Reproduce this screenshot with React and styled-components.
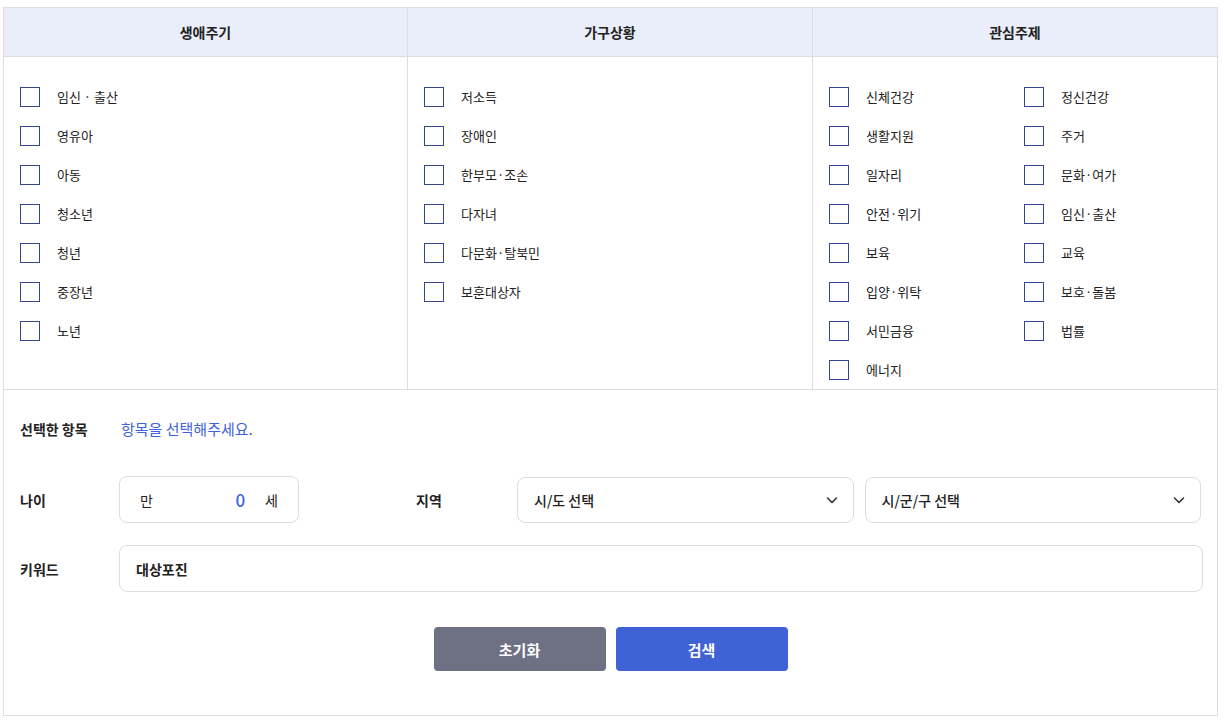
import React from 'react';
import styled, { createGlobalStyle } from 'styled-components';

const GlobalStyle = createGlobalStyle`
  body {
    margin: 0;
    background: #fff;
    font-family: "Noto Sans CJK KR", "Noto Sans", sans-serif;
    color: #222;
  }
`;

const lifeCycle = ['임신 · 출산', '영유아', '아동', '청소년', '청년', '중장년', '노년'];
const household = ['저소득', '장애인', '한부모·조손', '다자녀', '다문화·탈북민', '보훈대상자'];
const interests = [
  '신체건강', '정신건강', '생활지원', '주거', '일자리', '문화·여가', '안전·위기', '임신·출산',
  '보육', '교육', '입양·위탁', '보호·돌봄', '서민금융', '법률', '에너지',
];

const Wrapper = styled.div`
  box-sizing: border-box;
  width: 1215px;
  margin: 7px 0 0 3px;
  border: 1px solid #dcdde2;
`;

const Table = styled.div`
  display: grid;
  grid-template-columns: 403px 405px 1fr;
  border-bottom: 1px solid #dcdde2;
`;

const HeadCell = styled.div`
  box-sizing: border-box;
  height: 49px;
  display: flex;
  align-items: center;
  justify-content: center;
  background: #e9eefa;
  border-bottom: 1px solid #dcdde2;
  border-left: ${p => (p.first ? 'none' : '1px solid #dcdde2')};
  font-size: 14px;
  font-weight: 700;
`;

const BodyCell = styled.div`
  display: grid;
  grid-template-columns: ${p => (p.cols === 2 ? '195px 1fr' : '1fr')};
  align-content: start;
  padding: 20px 16px 0;
  height: 332px;
  box-sizing: border-box;
  border-left: ${p => (p.first ? 'none' : '1px solid #dcdde2')};
`;

const Option = styled.label`
  display: flex;
  align-items: center;
  height: 39px;
  font-size: 13px;
  color: #222;
  cursor: pointer;
`;

const Box = styled.span`
  box-sizing: border-box;
  width: 20px;
  height: 20px;
  border: 1px solid #34478e;
  margin-right: 17px;
  flex-shrink: 0;
`;

const Form = styled.div`
  padding: 28px 14px 44px 16px;
`;

const Row = styled.div`
  display: flex;
  align-items: center;
  margin-top: ${p => p.gap || 0}px;
`;

const Label = styled.div`
  width: ${p => p.w || 99}px;
  flex-shrink: 0;
  font-size: 14px;
  font-weight: 700;
  color: #222;
`;

const Hint = styled.div`
  margin-left: 2px;
  font-size: 15px;
  color: #3d63dd;
`;

const Field = styled.div`
  box-sizing: border-box;
  height: 47px;
  border: 1px solid #dcdde2;
  border-radius: 8px;
  display: flex;
  align-items: center;
  padding: 0 16px;
  font-size: 14px;
  background: #fff;
`;

const AgeBox = styled(Field)`
  width: 180px;
  padding: 0 20px;
  margin-right: 117px;
`;

const AgeValue = styled.span`
  flex: 1;
  text-align: right;
  margin-right: 20px;
  color: #3d63dd;
  font-size: 17px;
  font-weight: 500;
`;

const Selects = styled.div`
  flex: 1;
  display: flex;
  gap: 11px;
  margin-right: 2px;
`;

const Select = styled(Field)`
  flex: 1;
  height: 46px;
  justify-content: space-between;
  padding: 0 14px 0 16px;
  font-weight: 500;
`;

const Keyword = styled(Field)`
  flex: 1;
  font-weight: 700;
`;

const Buttons = styled.div`
  display: flex;
  justify-content: center;
  gap: 10px;
  margin: 35px 2px 0 0;
`;

const Button = styled.button`
  width: 172px;
  height: 44px;
  border: none;
  border-radius: 4px;
  background: ${p => (p.primary ? '#3f62d6' : '#6e7084')};
  color: #fff;
  font-family: inherit;
  font-size: 15px;
  font-weight: 700;
`;

const Chevron = () => (
  <svg width="14" height="14" viewBox="0 0 14 14" fill="none">
    <path d="M2.5 5l4.5 4.5L11.5 5" stroke="#333" strokeWidth="1.6" strokeLinecap="round" strokeLinejoin="round" />
  </svg>
);

const Options = ({ items }) =>
  items.map(t => (
    <Option key={t}>
      <Box />
      {t}
    </Option>
  ));

export default function App() {
  return (
    <Wrapper>
      <GlobalStyle />
      <Table>
        <HeadCell first>생애주기</HeadCell>
        <HeadCell>가구상황</HeadCell>
        <HeadCell>관심주제</HeadCell>
        <BodyCell first>
          <Options items={lifeCycle} />
        </BodyCell>
        <BodyCell>
          <Options items={household} />
        </BodyCell>
        <BodyCell cols={2}>
          <Options items={interests} />
        </BodyCell>
      </Table>
      <Form>
        <Row>
          <Label>선택한 항목</Label>
          <Hint>항목을 선택해주세요.</Hint>
        </Row>
        <Row gap={37}>
          <Label>나이</Label>
          <AgeBox>
            만<AgeValue>0</AgeValue>세
          </AgeBox>
          <Label w={101}>지역</Label>
          <Selects>
            <Select>
              시/도 선택
              <Chevron />
            </Select>
            <Select>
              시/군/구 선택
              <Chevron />
            </Select>
          </Selects>
        </Row>
        <Row gap={22}>
          <Label>키워드</Label>
          <Keyword>대상포진</Keyword>
        </Row>
        <Buttons>
          <Button>초기화</Button>
          <Button primary>검색</Button>
        </Buttons>
      </Form>
    </Wrapper>
  );
}
